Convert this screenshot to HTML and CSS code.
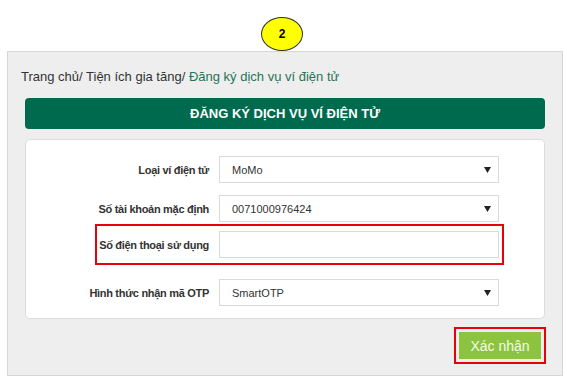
FILE: index.html
```html
<!DOCTYPE html>
<html lang="vi">
<head>
    <meta charset="UTF-8">
    <meta name="viewport" content="width=device-width, initial-scale=1.0">
    <title>Đăng ký dịch vụ ví điện tử</title>
    <link rel="stylesheet" href="styles.css">
</head>
<body>

<div class="step">
    <div class="step-badge">2</div>
</div>

<div class="panel">
    <div class="breadcrumb">Trang chủ/ Tiện ích gia tăng/ <a href="#">Đăng ký dịch vụ ví điện tử</a></div>
    <div class="panel-title">ĐĂNG KÝ DỊCH VỤ VÍ ĐIỆN TỬ</div>

    <div class="form-card">
        <div class="form-row">
            <label class="form-label">Loại ví điện tử</label>
            <select class="form-control">
                <option>MoMo</option>
            </select>
        </div>
        <div class="form-row row-tight">
            <label class="form-label">Số tài khoản mặc định</label>
            <select class="form-control">
                <option>0071000976424</option>
            </select>
        </div>
        <!-- dòng được khoanh đỏ -->
        <div class="highlight highlight-row">
            <div class="form-row">
                <label class="form-label">Số điện thoại sử dụng</label>
                <input class="form-control" type="text">
            </div>
        </div>
        <div class="form-row">
            <label class="form-label">Hình thức nhận mã OTP</label>
            <select class="form-control">
                <option>SmartOTP</option>
            </select>
        </div>
    </div>

    <div class="actions">
        <div class="highlight">
            <button class="btn-confirm">Xác nhận</button>
        </div>
    </div>
</div>

</body>
</html>
```

FILE: styles.css
```css
body {
    font-family: "Liberation Sans", Arial, sans-serif;
    background-color: #FFFFFF;
    margin: 0;
    color: #333333;
}
.step {
    height: 51px;
    display: flex;
    justify-content: center;
    padding-right: 3px;
}
.step-badge {
    margin-top: 17px;
    width: 40px;
    height: 32px;
    border: 1px solid #333333;
    border-radius: 50%;
    background-color: #FFFF00;
    color: #000000;
    font-size: 12px;
    font-weight: bold;
    line-height: 32px;
    text-align: center;
    position: relative;
    z-index: 1;
}
.panel {
    margin: 0 4px 0 7px;
    background-color: #EEEEEE;
    border: 1px solid #D6D6D6;
    padding: 17px 17px 11px 17px;
}
.breadcrumb {
    font-size: 13px;
    line-height: 16px;
    padding-left: 13px;
    margin-left: -17px;
    color: #333333;
}
.breadcrumb a {
    color: #1E7555;
    text-decoration: none;
}
.panel-title {
    margin-top: 13px;
    height: 31px;
    line-height: 31px;
    background-color: #006A4E;
    border-radius: 4px;
    color: #FFFFFF;
    font-size: 13px;
    font-weight: bold;
    text-align: center;
}
.form-card {
    margin-top: 10px;
    background-color: #FFFFFF;
    border: 1px solid #DDDDDD;
    border-radius: 5px;
    padding: 16px 0 12px 0;
}
.form-row {
    display: flex;
    align-items: center;
    gap: 10px;
    margin-bottom: 12px;
}
.form-row:last-child {
    margin-bottom: 0;
}
.row-tight {
    margin-bottom: 2px;
}
.form-label {
    width: 183px;
    text-align: right;
    font-size: 11px;
    font-weight: bold;
    letter-spacing: -0.3px;
    color: #333333;
}
.form-control {
    width: 280px;
    height: 27px;
    box-sizing: border-box;
    border: 1px solid #DADADA;
    background-color: #FFFFFF;
    font-family: "Liberation Sans", Arial, sans-serif;
    font-size: 11px;
    color: #333333;
    padding: 0 0 0 12px;
    margin: 0;
    border-radius: 0;
    outline: none;
}
select.form-control {
    appearance: none;
    -webkit-appearance: none;
    background-image: url("data:image/svg+xml;utf8,<svg xmlns='http://www.w3.org/2000/svg' width='7' height='7'><path d='M0 1h7L3.5 7z' fill='%23222'/></svg>");
    background-repeat: no-repeat;
    background-position: right 7px center;
}
.highlight {
    border: 2px solid #E8000B;
}
.highlight-row {
    margin: 0 40px 14px 69px;
    padding: 5px 0;
}
.highlight-row .form-row {
    margin-bottom: 0;
}
.highlight-row .form-label {
    width: 112px;
}
.actions {
    display: flex;
    justify-content: flex-end;
    margin-top: 8px;
    margin-right: -1px;
}
.actions .highlight {
    padding: 3px;
}
.btn-confirm {
    display: block;
    width: 82px;
    height: 27px;
    border: none;
    background-color: #8CC43F;
    color: #F4FAEC;
    font-family: "Liberation Sans", Arial, sans-serif;
    font-size: 14px;
    cursor: pointer;
}
```
